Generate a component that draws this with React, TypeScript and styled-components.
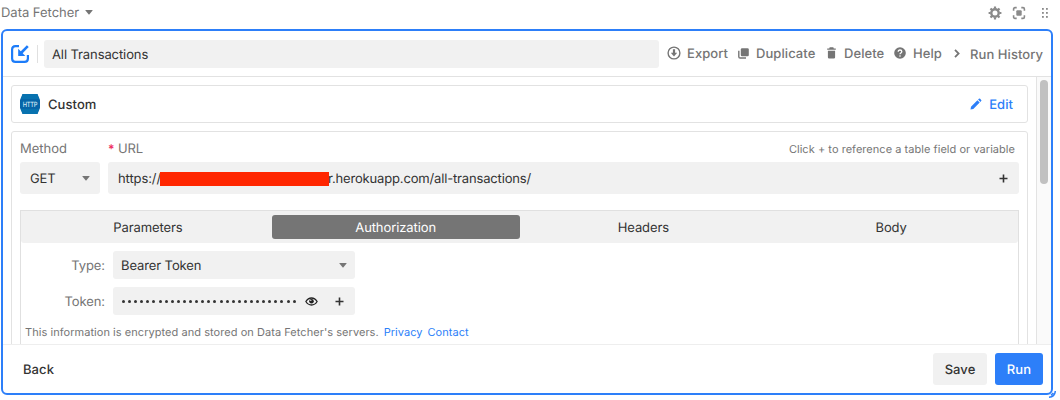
import React from 'react';
import styled, { createGlobalStyle, css } from 'styled-components';

const GlobalStyle = createGlobalStyle`
  * { box-sizing: border-box; }
  body { margin: 0; background: #fff; overflow: hidden; font-family: Inter, "Liberation Sans", sans-serif; font-size: 13px; color: #333; text-rendering: geometricPrecision; }
  svg { display: block; flex: none; }
`;

const BLUE = '#2d7ff9';
const GREY = '#757575';

const Page = styled.div`
  position: relative;
  width: 1060px;
  height: 400px;
  padding-left: 1px;
`;

const TitleBar = styled.div`
  height: 29px;
  padding: 0 11px 4px 0;
  display: flex;
  align-items: center;
  color: ${GREY};
  > span { padding-top: 0; }
`;

const Label = styled.span<{ $spacing?: number; $weight?: number; $size?: number; $color?: string }>`
  white-space: nowrap;
  line-height: 16px;
  padding-top: ${(p) => (p.$size ? 0 : 2)}px;
  font-size: ${(p) => p.$size ?? 13}px;
  font-weight: ${(p) => p.$weight ?? 400};
  letter-spacing: ${(p) => p.$spacing ?? (p.$weight ? 0.07 : p.$size ? 0.04 : -0.1)}px;
  ${(p) => p.$color && css`color: ${p.$color};`}
`;

const CaretIcon = styled.svg`
  color: ${GREY};
`;

const Caret = ({ className }: { className?: string }) => (
  <CaretIcon className={className} width="8" height="5" viewBox="0 0 8 5" fill="currentColor">
    <path d="M.7 0h6.6q.5 0 .2.5L4.5 4.3q-.5.6-1 0L.5.5Q.2 0 .7 0z" />
  </CaretIcon>
);

const TitleCaret = styled(Caret)`
  margin-left: 6px;
`;

const WindowTools = styled.div`
  margin-left: auto;
  display: flex;
  align-items: center;
  color: #8a8a8a;
  svg + svg { margin-left: 10px; }
  svg:last-child { margin-left: 15px; }
`;

const Frame = styled.div`
  width: 1052px;
  height: 366px;
  border: 2px solid ${BLUE};
  border-radius: 6px;
  background: #fff;
  display: flex;
  flex-direction: column;
  overflow: hidden;
`;

const Header = styled.div`
  height: 46px;
  flex: none;
  border-bottom: 1px solid #e2e2e2;
  display: flex;
  align-items: center;
  padding: 0 0 0 8px;
`;

const Divider = styled.i`
  width: 1px;
  height: 18px;
  margin: 0 6px 0 8px;
  background: #e0e0e0;
`;

const NameField = styled.div`
  width: 615px;
  height: 28px;
  padding: 0 8px;
  margin-right: 8px;
  border-radius: 3px;
  background: #f1f1f1;
  display: flex;
  align-items: center;
`;

const Action = styled.div<{ $width: number; $text: number; $drop?: number }>`
  width: ${(p) => p.$width}px;
  display: flex;
  align-items: center;
  color: ${GREY};
  span { position: relative; top: ${(p) => p.$drop ?? 0}px; }
  margin-top: -2px;
  svg { margin-top: 1px; margin-right: ${(p) => p.$text}px; }
`;

const Body = styled.div`
  height: 267px;
  flex: none;
  display: flex;
  overflow: hidden;
`;

const Content = styled.div`
  width: 1033px;
  padding: 8px 8px 0;
  flex: none;
`;

const ScrollTrack = styled.div`
  flex: 1;
  background: #fafafa;
  border-left: 1px solid #e3e3e3;
  padding: 3px 0 0 3px;
`;

const ScrollThumb = styled.div`
  width: 8px;
  height: 104px;
  border-radius: 4px;
  background: #c1c1c1;
`;

const Card = styled.div`
  border: 1px solid #e2e2e2;
  border-radius: 3px;
`;

const SourceCard = styled(Card)`
  height: 38px;
  padding: 0 14px 0 8px;
  margin-bottom: 8px;
  display: flex;
  align-items: center;
`;

const SourceName = styled(Label)`
  margin-left: 8px;
`;

const EditLink = styled.div`
  margin-left: auto;
  display: flex;
  align-items: center;
  gap: 7px;
  color: ${BLUE};
`;

const RequestCard = styled(Card)`
  height: 300px;
  padding: 8px 8px 0;
`;

const FieldLabels = styled.div`
  display: flex;
  align-items: center;
  height: 22px;
  padding: 0 4px 4px 0;
  color: ${GREY};
  > span { padding-top: 0; }
`;

const MethodLabel = styled(Label)`
  width: 88px;
`;

const Required = styled.b`
  width: 10px;
  color: #ef3061;
  font-size: 12px;
  line-height: 12px;
  font-weight: 600;
`;

const Hint = styled(Label)`
  margin-left: auto;
`;

const FieldRow = styled.div`
  display: flex;
  gap: 8px;
`;

const Field = styled.div<{ $width: number; $height: number; $left: number; $right: number }>`
  width: ${(p) => p.$width}px;
  height: ${(p) => p.$height}px;
  padding: 0 ${(p) => p.$right}px 0 ${(p) => p.$left}px;
  border-radius: 3px;
  background: #f1f1f1;
  display: flex;
  align-items: center;
  > :last-child { margin-left: auto; }
`;

const Scheme = styled(Label)`
  width: 42px;
`;

const Redaction = styled.i`
  position: relative;
  width: 169px;
  height: 14px;
  margin-top: 2px;
  background: #ff2600;
`;

const HostTail = styled(Label)`
  margin-left: -1px;
`;

const TabPanel = styled.div`
  margin-top: 16px;
  height: 230px;
  border: 1px solid #e0e0e0;
`;

const Tabs = styled.div`
  height: 32px;
  padding: 4px 3px;
  background: #f1f1f1;
  border-radius: 0 0 3px 3px;
  display: grid;
  grid-template-columns: repeat(4, 1fr);
`;

const Tab = styled.div<{ $active?: boolean }>`
  border-radius: 3px;
  display: flex;
  align-items: center;
  justify-content: center;
  background: ${(p) => (p.$active ? '#757575' : 'transparent')};
  color: ${(p) => (p.$active ? '#fff' : '#333')};
`;

const FormRow = styled.div`
  margin-top: 8px;
  display: flex;
  align-items: center;
`;

const FormLabel = styled(Label)`
  width: 84px;
  margin-right: 8px;
  text-align: right;
  color: ${GREY};
`;

const Mask = styled.div`
  width: 174px;
  display: flex;
  justify-content: space-between;
  margin-right: 9px;
  padding-top: 1px;
`;

const MaskDot = styled.i`
  width: 3px;
  height: 3px;
  border-radius: 50%;
  background: #333;
`;

const Note = styled.div`
  margin-top: 9px;
  padding-left: 4px;
  display: flex;
  color: ${GREY};
`;

const NoteLink = styled(Label)`
  margin-left: 5px;
  color: ${BLUE};
`;

const Footer = styled.div`
  flex: 1;
  border-top: 1px solid #eee;
  display: flex;
  align-items: center;
  gap: 8px;
  padding: 0 8px 0 20px;
`;

const BackLabel = styled(Label)`
  margin-right: auto;
`;

const Button = styled.div<{ $width: number; $primary?: boolean }>`
  width: ${(p) => p.$width}px;
  height: 32px;
  border-radius: 3px;
  display: flex;
  align-items: center;
  justify-content: center;
  background: ${(p) => (p.$primary ? BLUE : '#f1f1f1')};
  color: ${(p) => (p.$primary ? '#fff' : '#333')};
`;

const ResizeGrip = styled.svg`
  position: absolute;
  left: 1047px;
  top: 389px;
`;

const Gear = () => (
  <svg width="14" height="14" viewBox="0 0 14 14" fill="none" stroke="currentColor">
    <circle cx="7" cy="7" r="3.7" strokeWidth="2.4" />
    <path d="M7 .6v2M7 11.4v2M.6 7h2M11.4 7h2M2.5 2.5 4 4M10 10l1.5 1.5M11.5 2.5 10 4M4 10l-1.5 1.5" strokeWidth="2.2" />
  </svg>
);

const Expand = () => (
  <svg width="14" height="14" viewBox="0 0 14 14" fill="none" stroke="currentColor" strokeWidth="1.6">
    <path d="M1.6 4.7V3q0-1.4 1.4-1.4h1.7M9.3 1.6H11q1.4 0 1.4 1.4v1.7M12.4 9.3V11q0 1.4-1.4 1.4H9.3M4.7 12.4H3q-1.4 0-1.4-1.4V9.3" />
    <rect x="4.3" y="4.3" width="5.4" height="5.4" rx="1" fill="currentColor" stroke="none" />
  </svg>
);

const Grip = () => (
  <svg width="8" height="12" viewBox="0 0 8 12" fill="currentColor">
    {[1, 5, 9].map((y) => (
      <React.Fragment key={y}>
        <rect x="1" y={y} width="1.8" height="1.8" />
        <rect x="5" y={y} width="1.8" height="1.8" />
      </React.Fragment>
    ))}
  </svg>
);

const Logo = () => (
  <svg width="18" height="18" viewBox="0 0 18 18" fill="none" stroke="#1d7cf9" strokeWidth="2.2">
    <path d="M8 1.1H4.5Q1.1 1.1 1.1 4.5v9q0 3.4 3.4 3.4h9q3.4 0 3.4-3.4V10" />
    <path d="M16.8 1.2 9.5 8.5" strokeWidth="2.6" />
    <path d="M7.2 3.8v7.2h7.2z" fill="#1d7cf9" stroke="none" />
  </svg>
);

const ExportIcon = () => (
  <svg width="14" height="14" viewBox="0 0 14 14" fill="none" stroke="currentColor">
    <circle cx="7" cy="7" r="5.9" strokeWidth="1.4" />
    <path d="M7 3.3v5" strokeWidth="2.2" />
    <path d="M3.8 6.8h6.4L7 10.6z" fill="currentColor" stroke="none" />
  </svg>
);

const CopyIcon = () => (
  <svg width="11" height="11" viewBox="0 0 11 11" fill="currentColor">
    <rect x="2.8" y="0.3" width="8" height="8" rx="1.3" />
    <path d="M.8 2.8v5.9q0 1.3 1.3 1.3H8" fill="none" stroke="currentColor" strokeWidth="1.4" />
  </svg>
);

const TrashIcon = () => (
  <svg width="9" height="12" viewBox="0 0 9 12" fill="currentColor">
    <path d="M.2 1.5h2L2.7.3h3.6l.5 1.2h2v1.3H.2zM.9 3.8h7.2v6.5q0 1.3-1.3 1.3H2.2Q.9 11.6.9 10.3z" />
  </svg>
);

const HelpIcon = () => (
  <svg width="12" height="12" viewBox="0 0 12 12">
    <circle cx="6" cy="6" r="5.8" fill="currentColor" />
    <path d="M4.2 4.8q0-1.8 1.8-1.8t1.8 1.6q0 .8-.9 1.4T6 7.2" fill="none" stroke="#fff" strokeWidth="1.3" />
    <circle cx="6" cy="9" r=".8" fill="#fff" />
  </svg>
);

const Chevron = () => (
  <svg width="6" height="9" viewBox="0 0 6 9" fill="none" stroke="currentColor" strokeWidth="1.8">
    <path d="m1 .9 3.6 3.6L1 8.1" />
  </svg>
);

const HttpBadge = () => (
  <svg width="20" height="20" viewBox="0 0 20 20">
    <path d="M2.5 0h15L20 6v8l-2.5 6h-15L0 14V6z" fill="#0765a8" />
    <path d="M2.5 0h15l1.5 5H1zM1 15h18l-1.5 5h-15z" fill="#087bb4" opacity=".6" />
    <g transform="translate(10 12.7) scale(.8 1)">
      <text textAnchor="middle" fontSize="7.2" fontWeight="500" letterSpacing="-.3" fill="#d5e9f5">HTTP</text>
    </g>
  </svg>
);

const Pencil = () => (
  <svg width="12" height="12" viewBox="0 0 12 12" fill={BLUE}>
    <path d="M.5 11.5 1 8.7 7.4 2.3l2.3 2.3L3.3 11zM8.1 1.6l.8-.8q.6-.6 1.2 0l1.1 1.1q.6.6 0 1.2l-.8.8z" />
  </svg>
);

const Plus = () => (
  <svg width="9" height="9" viewBox="0 0 9 9" stroke="#333" strokeWidth="1.6">
    <path d="M4.5.5v8M.5 4.5h8" />
  </svg>
);

const Eye = () => (
  <svg width="13" height="9" viewBox="0 0 13 9">
    <path d="M.9 4.5Q3 1 6.5 1T12.1 4.5Q10 8 6.5 8T.9 4.5z" fill="#f1f1f1" stroke="#222" strokeWidth="1.3" />
    <circle cx="6.5" cy="4.3" r="2.3" fill="#222" />
    <circle cx="5.8" cy="3.4" r=".7" fill="#ddd" />
  </svg>
);

export default function App() {
  return (
    <Page>
      <GlobalStyle />
      <TitleBar>
        <Label $spacing={-0.02}>Data Fetcher</Label>
        <TitleCaret />
        <WindowTools><Gear /><Expand /><Grip /></WindowTools>
      </TitleBar>
      <Frame>
        <Header>
          <Logo />
          <Divider />
          <NameField><Label>All Transactions</Label></NameField>
          <Action $width={71} $text={6}><ExportIcon /><Label $weight={500}>Export</Label></Action>
          <Action $width={89} $text={7}><CopyIcon /><Label $weight={500}>Duplicate</Label></Action>
          <Action $width={67} $text={8}><TrashIcon /><Label $weight={500}>Delete</Label></Action>
          <Action $width={60} $text={7}><HelpIcon /><Label $weight={500}>Help</Label></Action>
          <Action $width={89} $text={10} $drop={1}><Chevron /><Label $weight={500}>Run History</Label></Action>
        </Header>
        <Body>
          <Content>
            <SourceCard>
              <HttpBadge />
              <SourceName $weight={500}>Custom</SourceName>
              <EditLink><Pencil /><Label $weight={500}>Edit</Label></EditLink>
            </SourceCard>
            <RequestCard>
              <FieldLabels>
                <MethodLabel $spacing={0}>Method</MethodLabel>
                <Required>*</Required>
                <Label>URL</Label>
                <Hint $size={11}>Click + to reference a table field or variable</Hint>
              </FieldLabels>
              <FieldRow>
                <Field $width={80} $height={32} $left={10} $right={10}><Label>GET</Label><Caret /></Field>
                <Field $width={911} $height={32} $left={10} $right={11}>
                  <Scheme>https://</Scheme><Redaction /><HostTail $spacing={-0.16}>r.herokuapp.com/all-transactions/</HostTail><Plus />
                </Field>
              </FieldRow>
              <TabPanel>
                <Tabs>
                  <Tab><Label>Parameters</Label></Tab>
                  <Tab $active><Label>Authorization</Label></Tab>
                  <Tab><Label>Headers</Label></Tab>
                  <Tab><Label>Body</Label></Tab>
                </Tabs>
                <FormRow>
                  <FormLabel>Type:</FormLabel>
                  <Field $width={242} $height={28} $left={8} $right={8}><Label>Bearer Token</Label><Caret /></Field>
                </FormRow>
                <FormRow>
                  <FormLabel>Token:</FormLabel>
                  <Field $width={242} $height={28} $left={9} $right={11}>
                    <Mask>{Array.from({ length: 29 }, (_, i) => <MaskDot key={i} />)}</Mask>
                    <Eye />
                    <Plus />
                  </Field>
                </FormRow>
                <Note>
                  <Label $size={11} $spacing={0.05}>This information is encrypted and stored on Data Fetcher's servers.</Label>
                  <NoteLink $size={11}>Privacy</NoteLink>
                  <NoteLink $size={11}>Contact</NoteLink>
                </Note>
              </TabPanel>
            </RequestCard>
          </Content>
          <ScrollTrack><ScrollThumb /></ScrollTrack>
        </Body>
        <Footer>
          <BackLabel $weight={500}>Back</BackLabel>
          <Button $width={54}><Label $weight={500}>Save</Label></Button>
          <Button $width={48} $primary><Label $weight={500}>Run</Label></Button>
        </Footer>
      </Frame>
      <ResizeGrip width="9" height="9" viewBox="0 0 9 9" fill="none" stroke={BLUE} strokeWidth="1.5">
        <path d="M8.3 2Q8 7.6 2 8.2M4 6.2 6.3 4" />
      </ResizeGrip>
    </Page>
  );
}
